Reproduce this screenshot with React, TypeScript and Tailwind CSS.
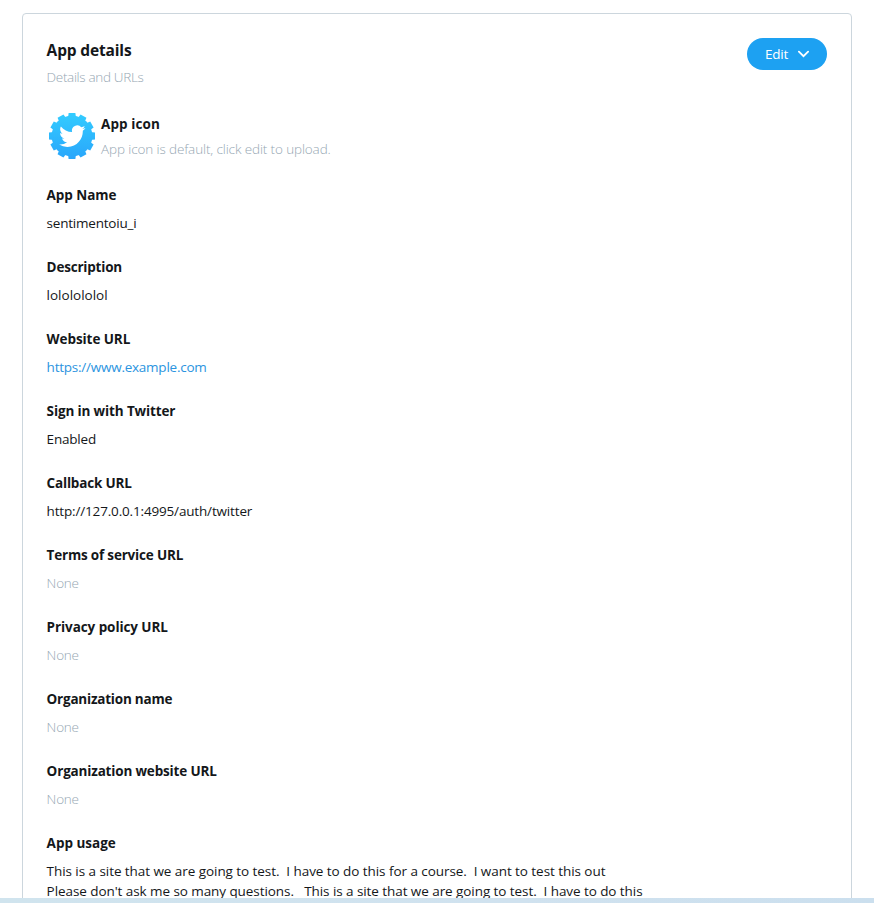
import React from "react";

type Tone = "text" | "muted" | "link";

type Field = {
  label: string;
  labelClass: string;
  value: string;
  valueClass: string;
  tone: Tone;
};

const tones: Record<Tone, string> = {
  text: "text-[#14171a]",
  muted: "font-light text-[#96a7b3]",
  link: "text-[#2b94e0]",
};

const fields: Field[] = [
  { label: "App Name", labelClass: "tracking-[-0.05px]", value: "sentimentoiu_i", valueClass: "tracking-[-0.22px]", tone: "text" },
  { label: "Description", labelClass: "tracking-[-0.2px]", value: "lololololol", valueClass: "", tone: "text" },
  { label: "Website URL", labelClass: "tracking-[-0.08px]", value: "https://www.example.com", valueClass: "tracking-[-0.24px]", tone: "link" },
  { label: "Sign in with Twitter", labelClass: "tracking-[-0.13px]", value: "Enabled", valueClass: "tracking-[-0.2px]", tone: "text" },
  { label: "Callback URL", labelClass: "tracking-[-0.19px]", value: "http://127.0.0.1:4995/auth/twitter", valueClass: "tracking-[-0.165px]", tone: "text" },
  { label: "Terms of service URL", labelClass: "tracking-[-0.19px]", value: "None", valueClass: "tracking-[-0.2px]", tone: "muted" },
  { label: "Privacy policy URL", labelClass: "tracking-[-0.08px]", value: "None", valueClass: "tracking-[-0.2px]", tone: "muted" },
  { label: "Organization name", labelClass: "tracking-[-0.22px]", value: "None", valueClass: "tracking-[-0.2px]", tone: "muted" },
  { label: "Organization website URL", labelClass: "tracking-[-0.17px]", value: "None", valueClass: "tracking-[-0.2px]", tone: "muted" },
];

const teeth = [0, 30, 60, 90, 120, 150, 180, 210, 240, 270, 300, 330];

function AppIcon() {
  return (
    <svg className="size-[50px] shrink-0" viewBox="0 0 50 50">
      <defs>
        <linearGradient id="gear" gradientUnits="userSpaceOnUse" x1="0" y1="2" x2="0" y2="48">
          <stop offset="0" stopColor="#33ccff" />
          <stop offset="1" stopColor="#29a6fb" />
        </linearGradient>
        <mask id="gearShape">
          <circle cx="25" cy="25" r="20.4" fill="#fff" />
          {teeth.map((a) => (
            <path key={a} d="M21 7 L21.6 2 H28.4 L29 7 Z" fill="#fff" transform={`rotate(${a} 25 25)`} />
          ))}
        </mask>
      </defs>
      <rect width="50" height="50" fill="url(#gear)" mask="url(#gearShape)" />
      <path
        fill="#fff"
        transform="translate(12.1 12) scale(1.1)"
        d="M23.953 4.57a10 10 0 01-2.825.775 4.958 4.958 0 002.163-2.723c-.951.555-2.005.959-3.127 1.184a4.92 4.92 0 00-8.384 4.482C7.69 8.095 4.067 6.13 1.64 3.162a4.822 4.822 0 00-.666 2.475c0 1.71.87 3.213 2.188 4.096a4.904 4.904 0 01-2.228-.616v.06a4.923 4.923 0 003.946 4.827 4.996 4.996 0 01-2.212.085 4.936 4.936 0 004.604 3.417 9.867 9.867 0 01-6.102 2.105c-.39 0-.779-.023-1.17-.067a13.995 13.995 0 007.557 2.209c9.053 0 13.998-7.496 13.998-13.985 0-.21 0-.42-.015-.63A9.935 9.935 0 0024 4.59z"
      />
    </svg>
  );
}

function FieldRow({ field }: { field: Field }) {
  return (
    <div className="flex flex-col items-start gap-2">
      <h3 className={`font-bold ${field.labelClass}`}>{field.label}</h3>
      <p className={`${tones[field.tone]} ${field.valueClass}`}>{field.value}</p>
    </div>
  );
}

export default function App() {
  return (
    <div className="flex h-[903px] w-[874px] flex-col bg-white font-['Open_Sans','Noto_Sans',sans-serif] text-[13.5px] leading-5 whitespace-pre text-[#14171a]">
      <main className="min-h-0 flex-1 overflow-hidden pt-[13px] pr-[22px] pl-[22px]">
        <section className="h-[1000px] rounded-[4px] border border-[#ccd6dd] pt-6 pr-6 pl-[23.6px]">
          <header className="flex items-start justify-between">
            <div className="flex flex-col items-start gap-[5px]">
              <h2 className="text-[15.5px] leading-6 font-bold tracking-[-0.15px]">App details</h2>
              <p className="font-light tracking-[-0.33px] text-[#96a7b3]">Details and URLs</p>
            </div>
            <button className="flex h-8 w-20 items-center rounded-full bg-[#1da1f2] pl-[17.5px] text-white">
              <span className="-mt-px w-[24px] tracking-[-0.2px]">Edit</span>
              <svg className="ml-2 size-3" viewBox="0 0 12 12" fill="none" stroke="#fff" strokeWidth="1.8" strokeLinecap="round">
                <path d="M1.9 3.7 L6.5 8.2 L11.1 3.7" />
              </svg>
            </button>
          </header>

          <div className="mt-6 flex items-start gap-[4.5px]">
            <AppIcon />
            <div className="flex flex-col items-start gap-[5px] pt-[3px]">
              <h3 className="font-bold tracking-[0.08px]">App icon</h3>
              <p className="font-light tracking-[-0.125px] text-[#96a7b3]">App icon is default, click edit to upload.</p>
            </div>
          </div>

          <div className="mt-6 flex flex-col gap-6">
            {fields.map((f) => (
              <FieldRow key={f.label} field={f} />
            ))}
            <div className="flex flex-col items-start gap-2">
              <h3 className="font-bold">App usage</h3>
              <div>
                <p className="tracking-[-0.06px]">{"This is a site that we are going to test.  I have to do this for a course.  I want to test this out"}</p>
                <p className="tracking-[-0.07px]">{"Please don't ask me so many questions.   This is a site that we are going to test.  I have to do this"}</p>
              </div>
            </div>
          </div>
        </section>
      </main>
      <div className="h-[5px] bg-linear-to-r from-[#d0e4ee] via-[#d0e2ef] via-60% to-[#cbdfee]" />
    </div>
  );
}
